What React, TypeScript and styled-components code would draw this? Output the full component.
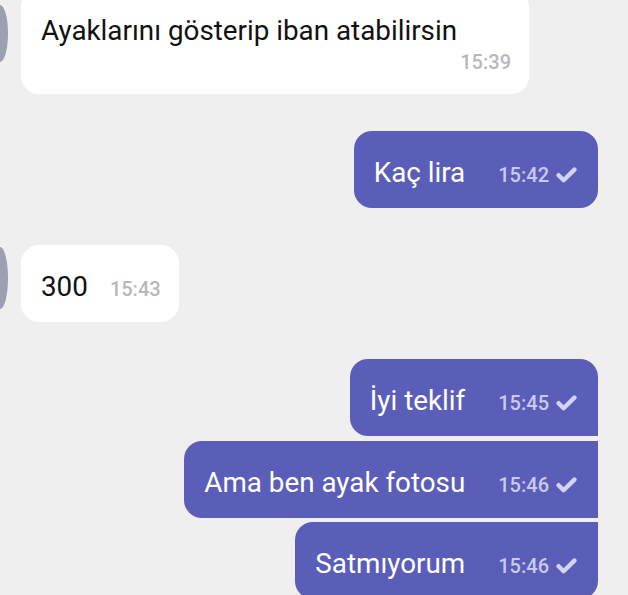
import styled, { createGlobalStyle } from "styled-components";

type Shape = "single" | "first" | "middle" | "last";

type Message = {
  id: number;
  text: string;
  time: string;
  out?: boolean;
  shape?: Shape;
  avatarTop?: number;
  avatarHeight?: number;
  gapBefore: number;
};

const messages: Message[] = [
  {
    id: 1,
    text: "Ayaklarını gösterip iban atabilirsin",
    time: "15:39",
    avatarTop: 16,
    avatarHeight: 57,
    gapBefore: 0,
  },
  { id: 2, text: "Kaç lira", time: "15:42", out: true, gapBefore: 37 },
  {
    id: 3,
    text: "300",
    time: "15:43",
    avatarTop: 2,
    avatarHeight: 62,
    gapBefore: 37,
  },
  { id: 4, text: "İyi teklif", time: "15:45", out: true, shape: "first", gapBefore: 37 },
  { id: 5, text: "Ama ben ayak fotosu", time: "15:46", out: true, shape: "middle", gapBefore: 5 },
  { id: 6, text: "Satmıyorum", time: "15:46", out: true, shape: "last", gapBefore: 4 },
];

const GlobalStyle = createGlobalStyle`
  html, body {
    margin: 0;
    padding: 0;
    background: #efefef;
  }
  body {
    font-family: Roboto, "Noto Sans", sans-serif;
  }
`;

const Screen = styled.div`
  width: 628px;
  height: 595px;
  overflow: hidden;
  background: #efefef;
`;

const Feed = styled.div`
  display: flex;
  flex-direction: column;
  margin-top: -11px;
`;

const Row = styled.div<{ $out?: boolean; $gap: number }>`
  display: flex;
  align-items: flex-start;
  justify-content: ${(p) => (p.$out ? "flex-end" : "flex-start")};
  gap: 13px;
  margin-top: ${(p) => p.$gap}px;
  padding-right: ${(p) => (p.$out ? "30px" : "0")};
`;

const Avatar = styled.div<{ $top: number; $height: number }>`
  flex: none;
  width: 8px;
  height: ${(p) => p.$height}px;
  margin-top: ${(p) => p.$top}px;
  background: #9d9fb0;
  border-radius: 0 8px 8px 0 / 0 50% 50% 0;
`;

const radius = (shape: Shape = "single") => {
  const r = "18px";
  switch (shape) {
    case "first":
      return `${r} ${r} 0 ${r}`;
    case "middle":
      return `${r} 0 0 ${r}`;
    case "last":
      return `${r} 0 ${r} ${r}`;
    default:
      return r;
  }
};

const Bubble = styled.div<{ $out?: boolean; $shape?: Shape }>`
  display: flex;
  flex-wrap: wrap;
  align-items: baseline;
  column-gap: ${(p) => (p.$out ? "33px" : "22px")};
  box-sizing: border-box;
  max-width: 508px;
  padding: 25px ${(p) => (p.$out ? "21px" : "18px")} 18px 20px;
  background: ${(p) => (p.$out ? "#5b5eb8" : "#ffffff")};
  border-radius: ${(p) => radius(p.$shape)};
`;

const Text = styled.span<{ $out?: boolean }>`
  font-size: 27.8px;
  line-height: 34px;
  color: ${(p) => (p.$out ? "#ffffff" : "#111111")};
`;

const Meta = styled.span<{ $out?: boolean }>`
  margin-left: auto;
  white-space: nowrap;
  font-size: 20px;
  font-weight: 500;
  line-height: 28px;
  color: ${(p) => (p.$out ? "#c9caef" : "#b8b8b8")};

  svg {
    margin-left: 7px;
    vertical-align: -1px;
  }
`;

const Check = () => (
  <svg width="21" height="16" viewBox="0 0 21 16" fill="none">
    <path
      d="M2.6 8.2 L7.6 13.2 L18.4 2.6"
      stroke="#d3d4f3"
      strokeWidth="4.4"
      strokeLinecap="round"
      strokeLinejoin="round"
    />
  </svg>
);

export default function App() {
  return (
    <Screen>
      <GlobalStyle />
      <Feed>
        {messages.map((m) => (
          <Row key={m.id} $out={m.out} $gap={m.gapBefore}>
            {!m.out && (
              <Avatar $top={m.avatarTop ?? 0} $height={m.avatarHeight ?? 60} />
            )}
            <Bubble $out={m.out} $shape={m.shape}>
              <Text $out={m.out}>{m.text}</Text>
              <Meta $out={m.out}>
                {m.time}
                {m.out && <Check />}
              </Meta>
            </Bubble>
          </Row>
        ))}
      </Feed>
    </Screen>
  );
}
